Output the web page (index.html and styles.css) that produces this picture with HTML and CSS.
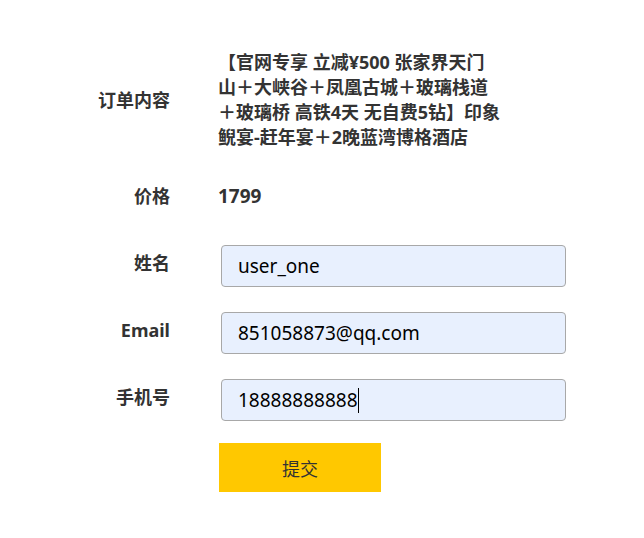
FILE: index.html
```html
<!DOCTYPE html>
<html lang="zh-CN">
<head>
<meta charset="utf-8">
<title>订单</title>
<link rel="stylesheet" href="styles.css">
</head>
<body>
<form class="order-form">
  <div class="row row-content">
    <div class="label">订单内容</div>
    <div class="content">【官网专享 立减¥500 张家界天门<br>山＋大峡谷＋凤凰古城＋玻璃栈道<br>＋玻璃桥 高铁4天 无自费5钻】印象<br>鲵宴-赶年宴＋2晚蓝湾博格酒店</div>
  </div>
  <div class="row row-price">
    <div class="label">价格</div>
    <div class="content">1799</div>
  </div>
  <div class="row row-input row-first">
    <label class="label" for="name">姓名</label>
    <div class="field"><input class="input" id="name" type="text" value="user_one"></div>
  </div>
  <div class="row row-input">
    <label class="label" for="email">Email</label>
    <div class="field"><input class="input" id="email" type="text" value="851058873@qq.com"></div>
  </div>
  <div class="row row-input">
    <label class="label" for="phone">手机号</label>
    <div class="field">
      <input class="input" id="phone" type="text" value="18888888888">
      <div class="caret-layer" aria-hidden="true"><span class="ghost">18888888888</span><span class="caret"></span></div>
    </div>
  </div>
  <div class="row row-submit">
    <div class="label"></div>
    <div class="actions"><button class="submit" type="button">提交</button></div>
  </div>
</form>
</body>
</html>
```

FILE: styles.css
```css
html, body {
  margin: 0;
  padding: 0;
  background: #ffffff;
}

body {
  font-family: "Noto Sans", "Noto Sans CJK SC", sans-serif;
  color: #333333;
}

.order-form {
  padding-top: 50px;
  display: flex;
  flex-direction: column;
}

.row {
  display: grid;
  grid-template-columns: 170px 1fr;
  column-gap: 48px;
  align-items: center;
}

.label {
  text-align: right;
  font-size: 18px;
  font-weight: 700;
  line-height: 25px;
  color: #333333;
}

.content {
  font-size: 18px;
  font-weight: 700;
  line-height: 25px;
  color: #333333;
  white-space: nowrap;
}

.row-price .content {
  font-size: 19px;
}

.row-price {
  margin-top: 34px;
}

.row-input {
  margin-top: 25px;
}

.row-first {
  margin-top: 36px;
}

.row-input .label {
  padding-bottom: 6px;
}

.field {
  position: relative;
  margin-left: 3px;
  width: 345px;
  height: 42px;
}

.input {
  box-sizing: border-box;
  display: block;
  width: 345px;
  height: 42px;
  margin: 0;
  padding: 0 16px;
  border: 1px solid #a8a8a8;
  border-radius: 4px;
  background: #e8f0fe;
  font-family: "Noto Sans", "Noto Sans CJK SC", sans-serif;
  font-size: 19px;
  color: #000000;
  outline: none;
}

.caret-layer {
  position: absolute;
  inset: 0;
  padding: 0 17px;
  display: flex;
  align-items: center;
  pointer-events: none;
  font-family: "Noto Sans", "Noto Sans CJK SC", sans-serif;
  font-size: 19px;
}

.ghost {
  color: transparent;
}

.caret {
  display: inline-block;
  width: 1px;
  height: 25px;
  background: #000000;
  margin-top: 1px;
}

.row-submit {
  margin-top: 22px;
}

.actions {
  margin-left: 1px;
}

.submit {
  display: block;
  width: 162px;
  height: 49px;
  margin: 0;
  padding: 0;
  border: none;
  background: #ffc800;
  font-family: "Noto Sans CJK SC", sans-serif;
  font-size: 18px;
  font-weight: 400;
  color: #333333;
  cursor: pointer;
}
```
